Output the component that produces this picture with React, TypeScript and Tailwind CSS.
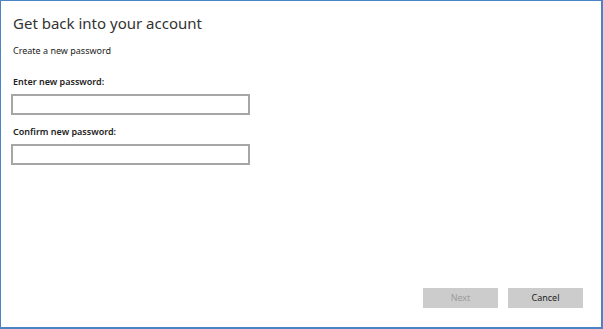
export default function App() {
  return (
    <div className="w-[603px] h-[329px] bg-white border-t border-l border-r-2 border-b-2 border-[#4a84c4] flex flex-col font-['Noto_Sans',sans-serif] text-[#222]">
      <div className="flex flex-col pl-[10px] pt-[12px]">
        <h1 className="pl-[2px] text-[15px] leading-[20px] text-[#333] font-normal">Get back into your account</h1>
        <p className="pl-[2px] mt-[12px] text-[9px] leading-[12px]">Create a new password</p>

        <label className="pl-[2px] mt-[19px] text-[9px] leading-[12px] font-semibold">Enter new password:</label>
        <input type="password" className="mt-[6px] w-[239px] h-[21px] border-2 border-[#a6a6a6] bg-white outline-none" />

        <label className="pl-[2px] mt-[11px] text-[9px] leading-[12px] font-semibold">Confirm new password:</label>
        <input type="password" className="mt-[6px] w-[239px] h-[21px] border-2 border-[#a6a6a6] bg-white outline-none" />
      </div>

      <div className="mt-auto flex justify-end gap-[10px] pr-[18px] pb-[19px]">
        <button disabled className="w-[75px] h-[20px] bg-[#cccccc] text-[#9d9d9d] text-[9px]">Next</button>
        <button className="w-[75px] h-[20px] bg-[#cccccc] text-[#222] text-[9px]">Cancel</button>
      </div>
    </div>
  );
}
